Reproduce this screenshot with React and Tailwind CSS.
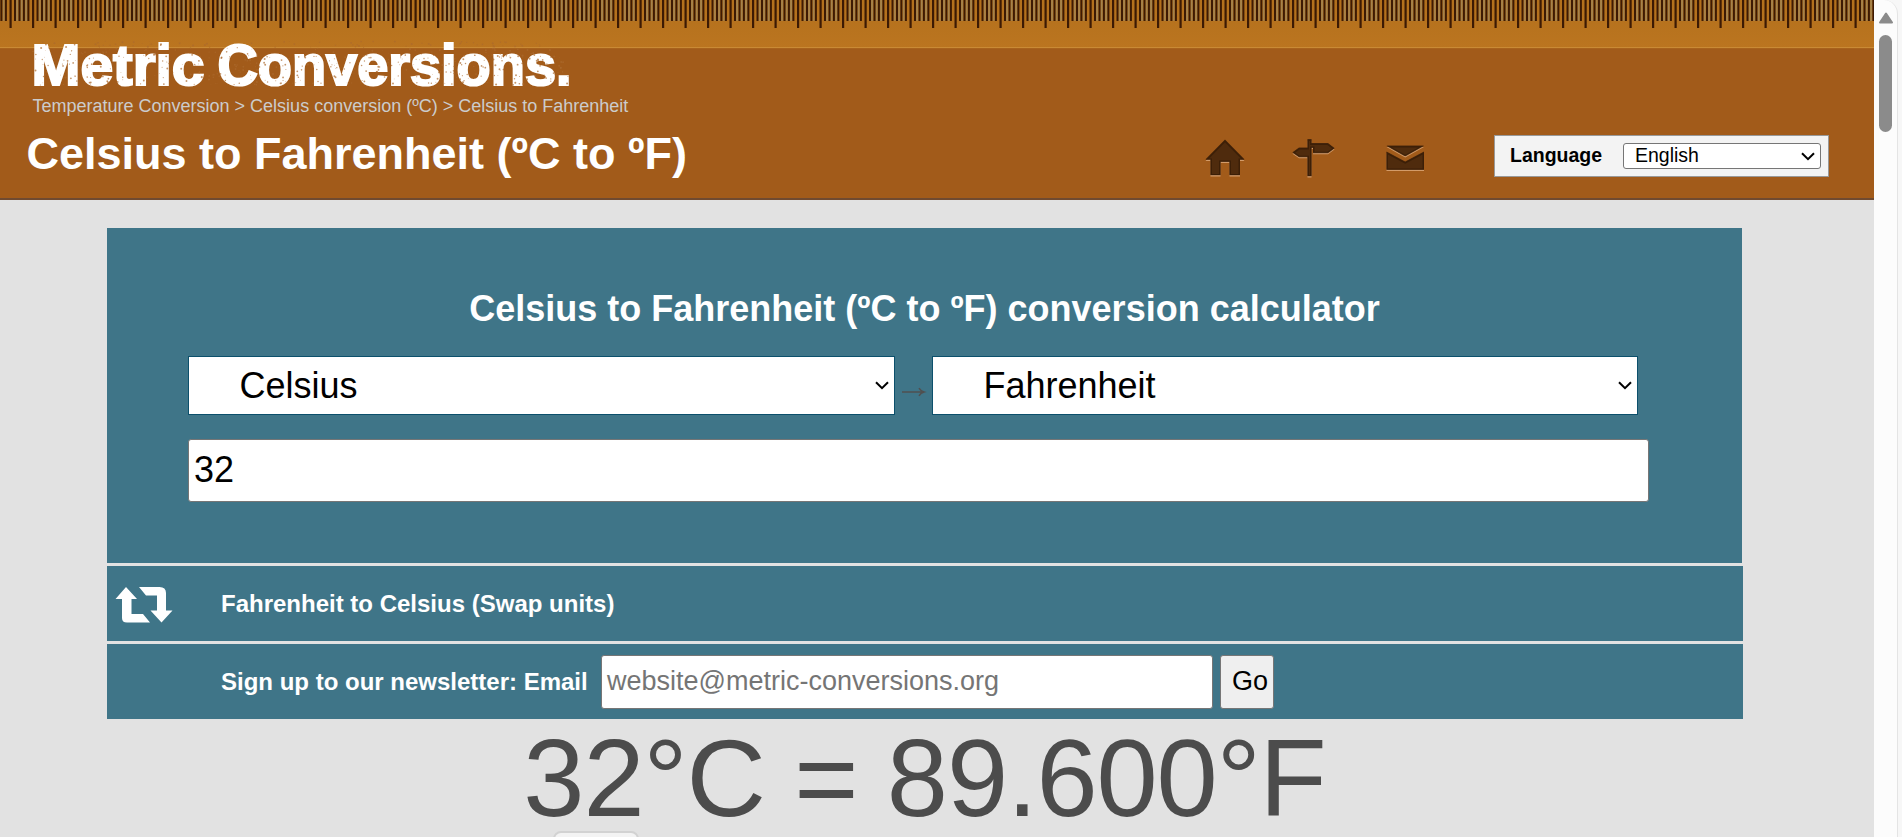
import React from 'react';

const TICKS = Array.from({ length: 84 }, (_, i) => i);

function Ruler() {
  return (
    <svg className="block h-[49px] w-[1874px] shrink-0" viewBox="0 0 1874 49" aria-hidden="true">
      <defs>
        <linearGradient id="wood" x1="0" y1="0" x2="0" y2="1">
          <stop offset="0" stopColor="#b3701c" />
          <stop offset="1" stopColor="#bb7520" />
        </linearGradient>
      </defs>
      <rect width="1874" height="49" fill="url(#wood)" />
      {TICKS.map((i) => {
        const x = 10.5 + i * 22.5;
        return (
          <g key={i} fill="#3c1a04">
            <rect x={x - 7.8} y="0" width="1.9" height="21" fill="#a5834c" />
            <rect x={x + 5.7} y="0" width="1.9" height="21" fill="#a5834c" />
            <rect x={x + 10.2} y="0" width="1.9" height="21" fill="#a5834c" />
            <rect x={x - 10.1} y="0" width="2" height="21" />
            <rect x={x - 5.6} y="0" width="2" height="21" />
            <rect x={x - 1} y="0" width="2.2" height="28" />
            <rect x={x + 3.5} y="0" width="2" height="21" />
            <rect x={x + 8} y="0" width="2" height="21" />
          </g>
        );
      })}
      <rect y="47" width="1874" height="1" fill="#c98a35" />
      <rect y="48" width="1874" height="1" fill="#a8621c" />
    </svg>
  );
}

function Speckles() {
  const dots = [];
  let s = 17;
  const rnd = () => {
    s = (s * 16807) % 2147483647;
    return s / 2147483647;
  };
  for (let i = 0; i < 520; i++) dots.push([20 + rnd() * 536, 10 + rnd() * 44, 0.35 + rnd() * 0.7]);
  return dots.map(([x, y, r], i) => <circle key={i} cx={x} cy={y} r={r} fill="#ab6a2d" opacity="0.7" />);
}

function Logo() {
  return (
    <svg className="block h-[76px] w-[600px] font-bold text-[58px] [font-family:'Liberation_Sans',sans-serif]" viewBox="0 0 600 76" role="img" aria-label="Metric Conversions.">
      <g fill="#fff" stroke="#fff" strokeWidth="2.2">
        <text x="18.5" y="54" textLength="173" lengthAdjust="spacingAndGlyphs">Metric</text>
        <text x="204.5" y="54" textLength="354" lengthAdjust="spacingAndGlyphs">Conversions.</text>
      </g>
      <Speckles />
    </svg>
  );
}

function Chevron({ className }) {
  return (
    <svg className={className} width="14" height="9" viewBox="0 0 14 9" fill="none" stroke="#000" strokeWidth="2">
      <path d="M1 1.2 7 7.2 13 1.2" />
    </svg>
  );
}

function IconShape({ d, id }) {
  return (
    <>
      <path d={d} fill="#d39b69" transform="translate(0 1.6)" />
      <path d={d} fill="#4f2b0d" />
      <clipPath id={id}><path d={d} /></clipPath>
      <path d={d} fill="none" stroke="#351b06" strokeWidth="3" clipPath={`url(#${id})`} transform="translate(0 .6)" opacity="0.7" />
    </>
  );
}

function UnitSelect({ label, className }) {
  return (
    <div className={`flex h-[59px] items-center justify-between border border-[#0c506c] bg-white pl-[50.5px] pr-[5px] text-[36px] leading-none text-black ${className}`}>
      <span>{label}</span>
      <Chevron className="shrink-0" />
    </div>
  );
}

export default function App() {
  return (
    <div className="flex h-[837px] w-[1902px] overflow-hidden bg-[#f7f7f7] [font-family:'Liberation_Sans',Arial,sans-serif]">
      <div className="flex w-[1874px] shrink-0 flex-col overflow-hidden bg-[#e2e2e2]">
        <header className="flex h-[200px] shrink-0 flex-col border-b-2 border-[#704a30] bg-[#a25b1a]">
          <Ruler />
          <div className="-mt-[18px] ml-[13px] h-[60px]"><Logo /></div>
          <nav className="ml-[32.5px] mt-[4px] whitespace-nowrap text-[18px] leading-[22px] text-[#cccccc]">
            Temperature Conversion &gt; Celsius conversion (ºC) &gt; Celsius to Fahrenheit
          </nav>
          <div className="flex items-start">
            <h1 className="ml-[26.5px] mt-[11px] w-[1152.5px] whitespace-nowrap text-[45px] font-bold leading-[52px] text-white">
              Celsius to Fahrenheit (ºC to ºF)
            </h1>
            <svg className="ml-px mt-[13.5px] h-[50px] w-[270px] shrink-0" viewBox="1180 130 270 50">
              <IconShape id="home" d="M1225 138.5 1244.5 158.3H1240V174H1229.5V160.5H1220.5V174H1210.5V158.3H1205.5Z" />
              <IconShape id="sign" d="M1307.5 138H1311.5V142H1328L1334.5 147 1328 151.7H1313V146.5H1311.5V175H1307.5V155.7H1299L1292.5 151.2 1299 146.5H1307.5Z" />
              <IconShape id="flap" d="M1386.5 144.5H1424L1405.2 155Z" />
              <IconShape id="mail" d="M1386.5 150.5 1405.2 160.5 1424 150.5V168.5H1386.5Z" />
            </svg>
            <div className="ml-[44px] mt-[18px] flex h-[42px] w-[335px] items-center border border-[#999] bg-[#f3f3f3] pl-[15px]">
              <span className="w-[113px] text-[19.5px] font-bold text-black">Language</span>
              <div className="flex h-[26px] w-[198px] items-center justify-between rounded-[3px] border border-[#767676] bg-white pl-[11px] pr-[5px] text-[19.5px] leading-none text-black">
                <span>English</span>
                <Chevron />
              </div>
            </div>
          </div>
        </header>

        <main className="ml-[107px] mt-[28px] flex w-[1636px] flex-col gap-[3px]">
          <section className="flex h-[335px] w-[1635px] flex-col bg-[#3f7588] pl-[81px]">
            <h2 className="mt-[60px] w-[1473px] text-center text-[36px] font-bold leading-[42px] text-white">
              Celsius to Fahrenheit (ºC to ºF) conversion calculator
            </h2>
            <div className="mt-[26px] flex">
              <UnitSelect label="Celsius" className="w-[707px]" />
              <svg className="mt-[30px] h-[12px] w-[37px]" viewBox="0 0 37 12" fill="none" stroke="#505050" strokeWidth="1.5">
                <path d="M7 6H28M24 2.2Q25.5 5 29 6 25.5 7 24 9.8" />
              </svg>
              <UnitSelect label="Fahrenheit" className="w-[706px]" />
            </div>
            <div className="mt-[24px] flex h-[63px] w-[1461px] items-center rounded-[3px] border border-[#767676] bg-white pb-[2px] pl-[5px] text-[36px] leading-none text-black">32</div>
          </section>
          <section className="flex h-[75px] items-center bg-[#3f7588]">
            <svg className="ml-[8px] h-[40px] w-[60px]" viewBox="0 0 60 40">
              <path d="M11 3 22 15H16.5V30H28L35 38.5H12Q7 38.5 7 34V15H.5ZM24 3H44.5Q51 3 51 9V26.5H57.5L46.5 38.5 35.5 26.5H42V11.5H31Z" fill="#fff" />
            </svg>
            <span className="ml-[46px] text-[24px] font-bold text-white">Fahrenheit to Celsius (Swap units)</span>
          </section>
          <section className="flex h-[75px] items-center bg-[#3f7588] pl-[114px]">
            <span className="w-[380px] whitespace-nowrap text-[24px] font-bold text-white">Sign up to our newsletter: Email</span>
            <div className="flex h-[54px] w-[612px] items-center rounded-[3px] border border-[#767676] bg-white pl-[5px] text-[27px] leading-none text-[#757575]">website@metric-conversions.org</div>
            <div className="ml-[7px] flex h-[54px] w-[54px] items-center rounded-[3px] border border-[#767676] bg-[#efefef] pl-[11px] text-[27px] leading-none text-black">Go</div>
          </section>
        </main>
        <div className="ml-[107px] mt-[-1px] h-[113px] w-[1635px] shrink-0 whitespace-nowrap text-center text-[110px] leading-[120px] tracking-[-1.1px] text-[#4c4c4c]">
          32°C = 89.600°F
        </div>
        <div className="ml-[553px] h-[30px] w-[86px] shrink-0 rounded-[8px] border-2 border-[#d2d2d2] bg-[#f3f3f3]" />
      </div>
      <div className="flex w-[24px] shrink-0 flex-col items-center rounded-tr-[14px] border-r border-[#e4e4e4] bg-[#fcfcfc]">
        <svg className="mt-[12px] h-[12px] w-[16px]" viewBox="0 0 16 12">
          <path d="M8 1.5 14 10.5H2Z" fill="#8b8b8b" stroke="#8b8b8b" strokeWidth="2" strokeLinejoin="round" />
        </svg>
        <div className="mt-[11px] h-[97px] w-[13px] rounded-full bg-[#8b8b8b]" />
      </div>
    </div>
  );
}
